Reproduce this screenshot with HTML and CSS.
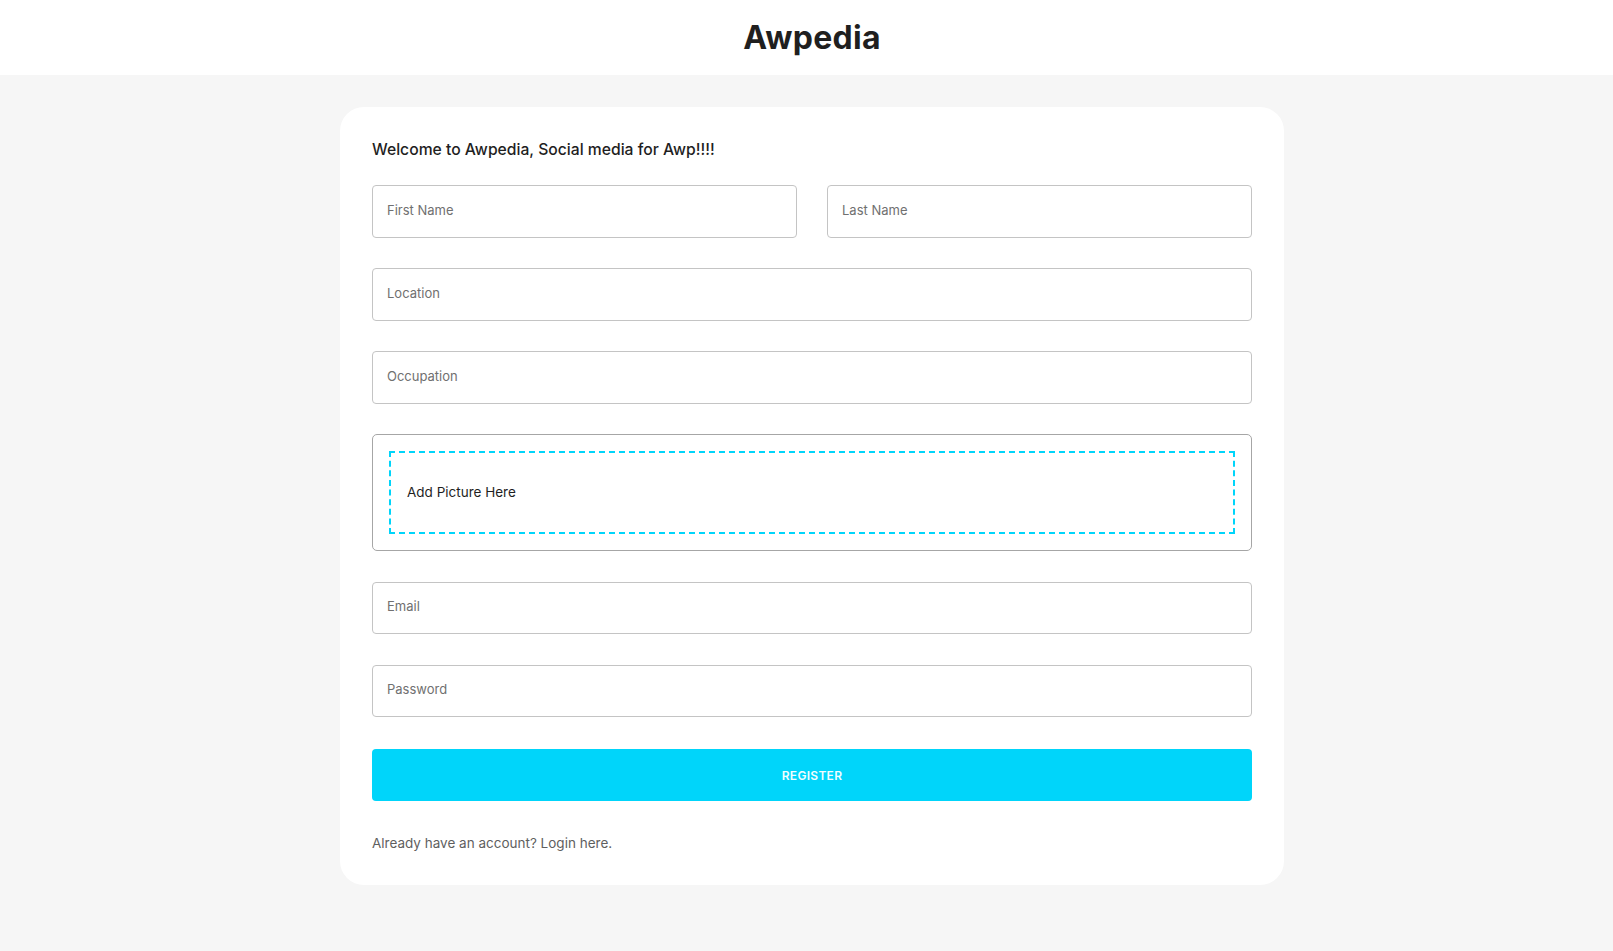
FILE: index.html
```html
<!DOCTYPE html>
<html lang="en">
<head>
<meta charset="utf-8">
<title>Awpedia</title>
<link rel="stylesheet" href="styles.css">
</head>
<body>
<header class="topbar">
  <h1 class="brand">Awpedia</h1>
</header>
<main class="page">
  <section class="card">
    <h2 class="welcome">Welcome to Awpedia, Social media for Awp!!!!</h2>
    <form class="form-grid">
      <div class="field half">First Name</div>
      <div class="field half">Last Name</div>
      <div class="field">Location</div>
      <div class="field">Occupation</div>
      <div class="dropzone-wrap">
        <div class="dropzone"><p>Add Picture Here</p></div>
      </div>
      <div class="field">Email</div>
      <div class="field">Password</div>
    </form>
    <button class="register" type="button">REGISTER</button>
    <p class="switch">Already have an account? Login here.</p>
  </section>
</main>
</body>
</html>
```
FILE: styles.css
```css
* { box-sizing: border-box; margin: 0; padding: 0; }
body {
  font-family: "Inter", "Noto Sans", sans-serif;
  background: #f6f6f6;
  min-height: 100vh;
}
.topbar {
  background: #ffffff;
  height: 75px;
  padding-left: 11px;
  display: flex;
  align-items: center;
  justify-content: center;
}
.brand {
  font-size: 32px;
  font-weight: 700;
  color: #1f1f1f;
  line-height: 1;
  letter-spacing: 0.3px;
}
.page {
  padding: 32px 0 32px 11px;
}
.card {
  width: 944px;
  margin: 0 auto;
  background: #ffffff;
  border-radius: 24px;
  padding: 32px;
}
.welcome {
  font-size: 15.7px;
  font-weight: 500;
  line-height: 22px;
  margin-bottom: 24px;
  color: #1f1f1f;
}
.form-grid {
  display: grid;
  grid-template-columns: repeat(4, minmax(0, 1fr));
  column-gap: 30px;
  row-gap: 30.5px;
}
.field {
  grid-column: span 4;
  height: 52.5px;
  border: 1px solid #c4c4c4;
  border-radius: 4px;
  padding: 0 14px 3px;
  display: flex;
  align-items: center;
  font-size: 13px;
  color: #707070;
}
.field.half { grid-column: span 2; }
.dropzone-wrap {
  grid-column: span 4;
  border: 1px solid #a6a6a6;
  border-radius: 5px;
  padding: 16px;
}
.dropzone {
  border: 2px dashed #00d5fa;
  padding: 16px;
}
.dropzone p {
  margin: 12px 0;
  line-height: 23px;
  font-size: 13.5px;
  color: #1f1f1f;
}
.register {
  display: block;
  width: 100%;
  height: 52px;
  margin: 32px 0;
  border: none;
  border-radius: 4px;
  background: #00d5fa;
  color: #f2fdff;
  font-family: inherit;
  font-size: 12px;
  font-weight: 600;
  letter-spacing: 0.3px;
}
.switch {
  font-size: 13.5px;
  line-height: 20px;
  color: #5f5f5f;
}
```
